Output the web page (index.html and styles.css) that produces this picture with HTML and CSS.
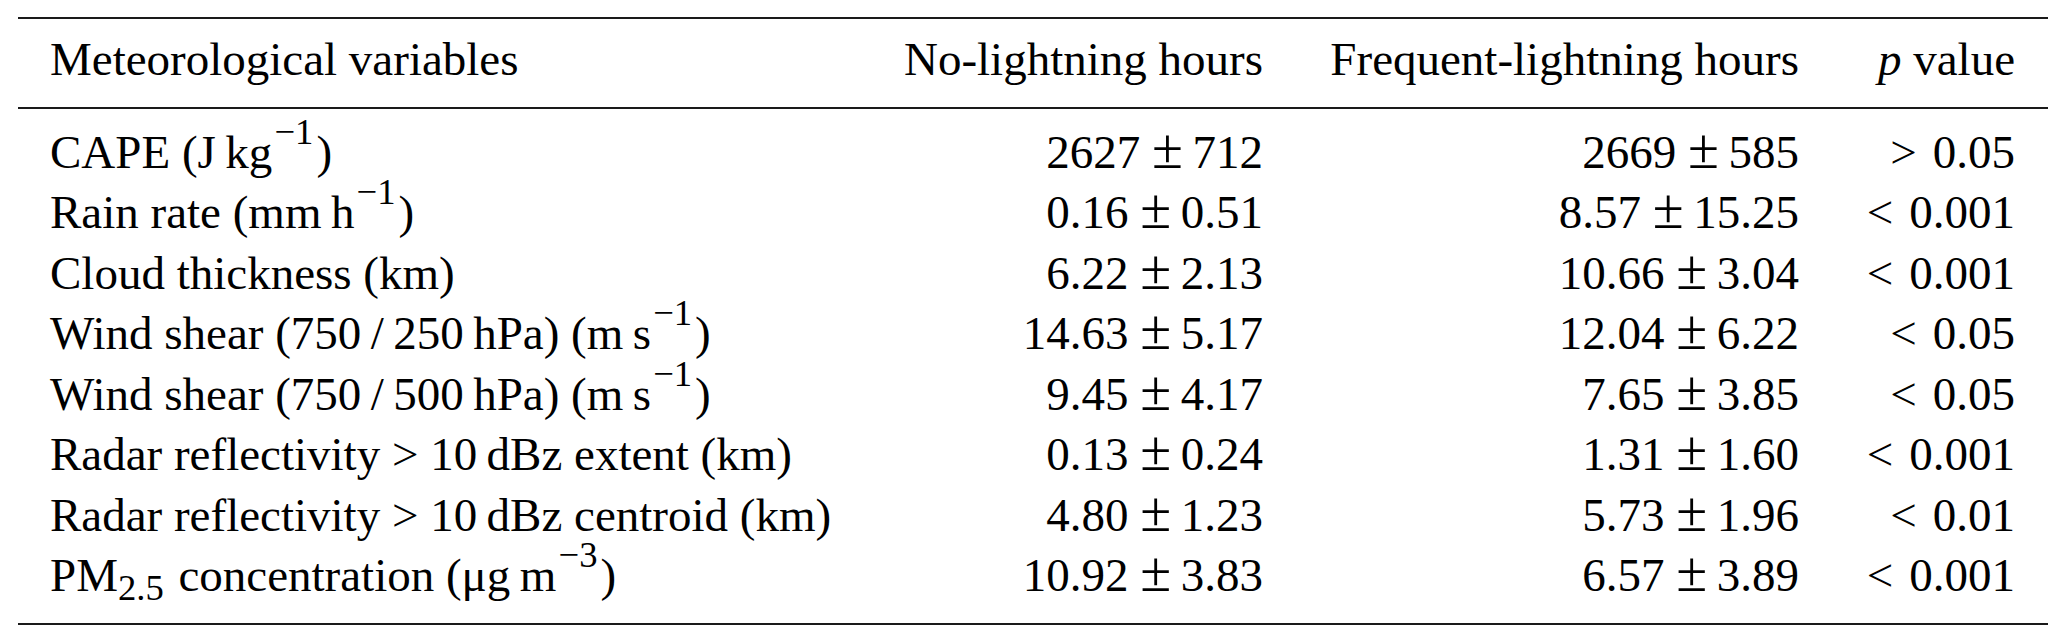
FILE: index.html
```html
<!DOCTYPE html>
<html>
<head>
<meta charset="utf-8">
<link rel="stylesheet" href="styles.css">
</head>
<body>
<table class="stats">
  <colgroup>
    <col class="c-var">
    <col class="c-no">
    <col class="c-freq">
    <col class="c-p">
  </colgroup>
  <thead>
    <tr>
      <th class="var">Meteorological variables</th>
      <th class="num">No-lightning hours</th>
      <th class="num">Frequent-lightning hours</th>
      <th class="num last"><i>p</i> value</th>
    </tr>
  </thead>
  <tbody>
    <tr>
      <td class="var">CAPE (J&thinsp;kg<sup>−1</sup>)</td>
      <td class="num">2627<span class="pm">±</span>712</td>
      <td class="num">2669<span class="pm">±</span>585</td>
      <td class="num last"><span class="rel">&gt;</span>0.05</td>
    </tr>
    <tr>
      <td class="var">Rain rate (mm&thinsp;h<sup>−1</sup>)</td>
      <td class="num">0.16<span class="pm">±</span>0.51</td>
      <td class="num">8.57<span class="pm">±</span>15.25</td>
      <td class="num last"><span class="rel">&lt;</span>0.001</td>
    </tr>
    <tr>
      <td class="var">Cloud thickness (km)</td>
      <td class="num">6.22<span class="pm">±</span>2.13</td>
      <td class="num">10.66<span class="pm">±</span>3.04</td>
      <td class="num last"><span class="rel">&lt;</span>0.001</td>
    </tr>
    <tr>
      <td class="var">Wind shear (750&thinsp;/&thinsp;250&thinsp;hPa) (m&thinsp;s<sup>−1</sup>)</td>
      <td class="num">14.63<span class="pm">±</span>5.17</td>
      <td class="num">12.04<span class="pm">±</span>6.22</td>
      <td class="num last"><span class="rel">&lt;</span>0.05</td>
    </tr>
    <tr>
      <td class="var">Wind shear (750&thinsp;/&thinsp;500&thinsp;hPa) (m&thinsp;s<sup>−1</sup>)</td>
      <td class="num">9.45<span class="pm">±</span>4.17</td>
      <td class="num">7.65<span class="pm">±</span>3.85</td>
      <td class="num last"><span class="rel">&lt;</span>0.05</td>
    </tr>
    <tr>
      <td class="var">Radar reflectivity &gt; 10&thinsp;dBz extent (km)</td>
      <td class="num">0.13<span class="pm">±</span>0.24</td>
      <td class="num">1.31<span class="pm">±</span>1.60</td>
      <td class="num last"><span class="rel">&lt;</span>0.001</td>
    </tr>
    <tr>
      <td class="var">Radar reflectivity &gt; 10&thinsp;dBz centroid (km)</td>
      <td class="num">4.80<span class="pm">±</span>1.23</td>
      <td class="num">5.73<span class="pm">±</span>1.96</td>
      <td class="num last"><span class="rel">&lt;</span>0.01</td>
    </tr>
    <tr>
      <td class="var">PM<sub>2.5</sub> concentration (μg&thinsp;m<sup>−3</sup>)</td>
      <td class="num">10.92<span class="pm">±</span>3.83</td>
      <td class="num">6.57<span class="pm">±</span>3.89</td>
      <td class="num last"><span class="rel">&lt;</span>0.001</td>
    </tr>
  </tbody>
</table>
</body>
</html>
```
FILE: styles.css
```css
html, body {
  margin: 0;
  padding: 0;
  background: #ffffff;
}

body {
  padding: 17px 0 0 18px;
  font-family: "Liberation Serif", "Times New Roman", serif;
  font-size: 47px;
  color: #000000;
}

.stats {
  border-collapse: separate;
  border-spacing: 0;
  table-layout: fixed;
  width: 2030px;
}

.c-var { width: 885px; }
.c-no { width: 360px; }
.c-freq { width: 536px; }
.c-p { width: 249px; }

.stats th,
.stats td {
  padding: 0;
  font-weight: normal;
  white-space: nowrap;
  line-height: 60.43px;
}

.stats th {
  line-height: 60px;
  padding-top: 10px;
  padding-bottom: 18px;
  border-top: 2px solid #1a1a1a;
  border-bottom: 2px solid #1a1a1a;
}

.stats tbody tr:first-child td {
  padding-top: 13px;
}

.stats tbody tr:last-child td {
  padding-bottom: 17px;
  border-bottom: 2px solid #1a1a1a;
}

.var {
  text-align: left;
  padding-left: 32px !important;
}

.num {
  text-align: right;
}

.last {
  padding-right: 33px !important;
}

.pm {
  font-size: 1.2em;
  line-height: 0;
  margin: 0 0.17em 0 0.21em;
}

.rel {
  margin-right: 0.34em;
}

sup, sub {
  font-size: 0.78em;
  line-height: 0;
}

sup {
  vertical-align: 0.66em;
  margin-left: 0.06em;
  margin-right: 0.08em;
}

sub {
  vertical-align: -0.24em;
  margin-right: 0.08em;
}
```
